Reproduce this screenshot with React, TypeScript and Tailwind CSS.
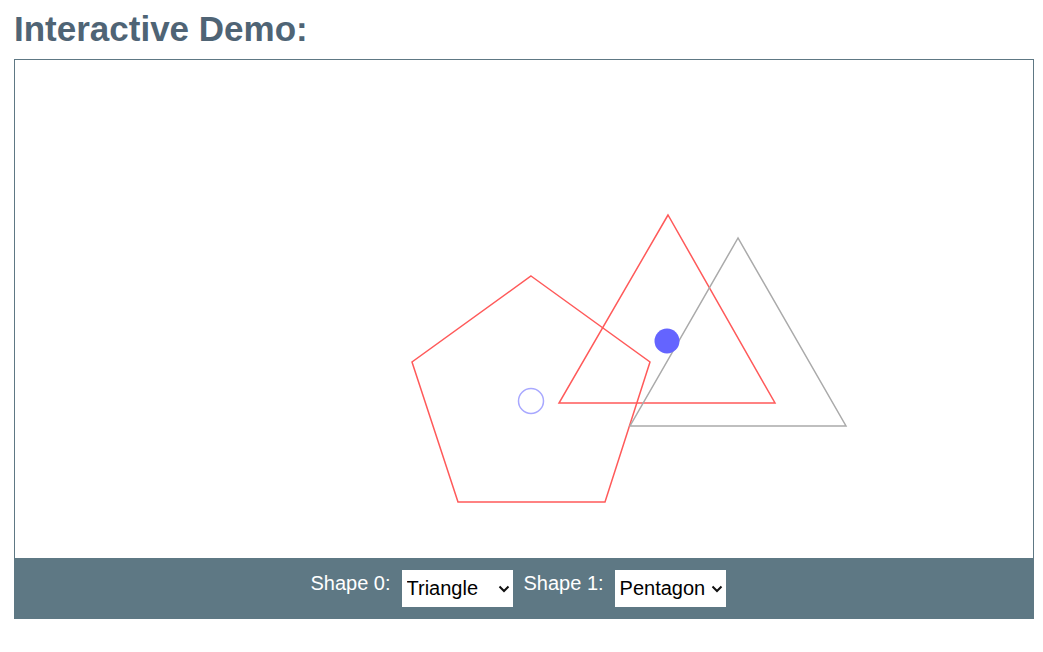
import React, { useState } from "react";

const shapes = ["Triangle", "Square", "Pentagon", "Hexagon"];

function ShapeSelect({ value, onChange }: { value: string; onChange: (v: string) => void }) {
  return (
    <div className="relative h-[37px] w-[111px] bg-white">
      <select
        value={value}
        onChange={(e) => onChange(e.target.value)}
        className="h-full w-full appearance-none bg-white pl-[5px] pr-[18px] text-[20px] text-black outline-none"
        style={{ fontFamily: "Arial, 'Liberation Sans', sans-serif" }}
      >
        {shapes.map((s) => (
          <option key={s}>{s}</option>
        ))}
      </select>
      <svg
        className="pointer-events-none absolute right-[3px] top-[15px]"
        width="12"
        height="8"
        viewBox="0 0 12 8"
        fill="none"
      >
        <path d="M1.5 1.5 L6 6 L10.5 1.5" stroke="#111" strokeWidth="2" />
      </svg>
    </div>
  );
}

export default function App() {
  const [shape0, setShape0] = useState("Triangle");
  const [shape1, setShape1] = useState("Pentagon");

  return (
    <div className="min-h-[652px] bg-white" style={{ fontFamily: "Arial, 'Liberation Sans', sans-serif" }}>
      <h1 className="pl-[14px] pt-[8px] text-[35px] font-bold leading-[42px] text-[#4f6475]">
        Interactive Demo:
      </h1>
      <div className="ml-[14px] mt-[9px] w-[1020px] border border-[#5e7884]">
        {/* Canvas */}
        <svg width="1018" height="498" viewBox="0 0 1018 498" className="block">
          <polygon
            points="516,216 635,302 590,442 443,442 397,302"
            fill="none"
            stroke="#ff5a5a"
            strokeWidth="1.5"
          />
          <circle cx="516" cy="341" r="12.5" fill="none" stroke="#a8a8ff" strokeWidth="1.5" />
          <polygon
            points="653,155 544,343 760,343"
            fill="none"
            stroke="#ff5a5a"
            strokeWidth="1.5"
          />
          <polygon
            points="723,178 615,366 831,366"
            fill="none"
            stroke="#aaaaaa"
            strokeWidth="1.5"
          />
          <circle cx="652" cy="281" r="12.5" fill="#6464ff" />
        </svg>
        {/* Controls */}
        <div className="flex h-[60px] items-center justify-center gap-[11px] bg-[#5e7884] pr-[12px]">
          <span className="-mt-[10px] text-[20px] leading-[30px] text-white">Shape 0:</span>
          <ShapeSelect value={shape0} onChange={setShape0} />
          <span className="-mt-[10px] text-[20px] leading-[30px] text-white">Shape 1:</span>
          <ShapeSelect value={shape1} onChange={setShape1} />
        </div>
      </div>
    </div>
  );
}
